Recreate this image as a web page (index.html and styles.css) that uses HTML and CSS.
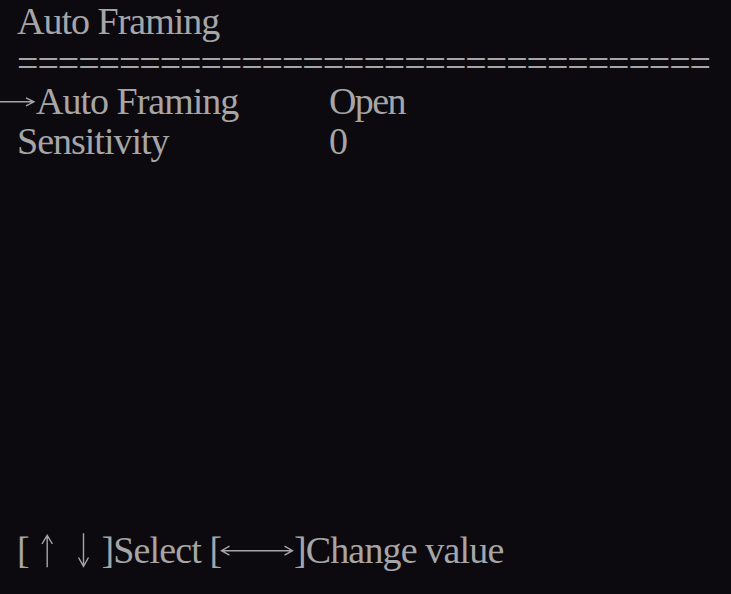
FILE: index.html
```html
<!DOCTYPE html>
<html lang="en">
<head>
<meta charset="utf-8">
<title>Auto Framing</title>
<link rel="stylesheet" href="styles.css">
</head>
<body>
<main class="osd">
  <div class="line title">Auto Framing</div>
  <div class="line rule">==================================</div>
  <div class="line row selected">
    <div class="label"><svg class="cursor" width="35" height="38" viewBox="0 0 35 38"><path d="M0 17.8H33.5M26 13.8L34 17.8L26 21.8" fill="none" stroke="currentColor" stroke-width="1.4"/></svg>Auto Framing</div>
    <div class="value">Open</div>
  </div>
  <div class="line row">
    <div class="label">Sensitivity</div>
    <div class="value">0</div>
  </div>
  <div class="line footer">[<svg class="keys" width="72.6" height="38" viewBox="0 0 72.6 38"><path d="M18.2 2.3V34.3M13 11L18.2 2.3L23.4 11M54.5 0.3V33.3M49.5 24.5L54.5 33.3L59.5 24.5" fill="none" stroke="currentColor" stroke-width="1.4"/></svg>]Select [<svg class="keys" width="72.5" height="38" viewBox="0 0 72.5 38"><path d="M0.5 17.7H71.5M8.5 13.2L0.5 17.7L8.5 22.2M63.5 13.2L71.5 17.7L63.5 22.2" fill="none" stroke="currentColor" stroke-width="1.4"/></svg>]Change value</div>
</main>
</body>
</html>
```
FILE: styles.css
```css
html, body {
  margin: 0;
  padding: 0;
  background: #0c0a0e;
}

.osd {
  box-sizing: border-box;
  height: 594px;
  display: flex;
  flex-direction: column;
  padding: 1px 0 24px 0;
  font-family: "Liberation Serif", "Times New Roman", serif;
  font-size: 38px;
  line-height: 40px;
  letter-spacing: -1px;
  color: #a6a6a8;
  white-space: nowrap;
  overflow: hidden;
}

.line {
  height: 40px;
}

.title {
  padding-left: 17px;
}

.rule {
  padding-left: 17px;
  letter-spacing: -1.05px;
  line-height: 44px;
}

.row {
  display: flex;
}

.label {
  box-sizing: border-box;
  width: 329px;
  padding-left: 17px;
}

.row.selected .label {
  padding-left: 0;
}

.value {
  letter-spacing: -1.6px;
}

.cursor {
  vertical-align: -8px;
  margin-right: 1px;
}

.footer {
  margin-top: auto;
  padding-left: 17px;
  letter-spacing: -0.85px;
}

.keys {
  vertical-align: -8px;
  overflow: visible;
}
```
